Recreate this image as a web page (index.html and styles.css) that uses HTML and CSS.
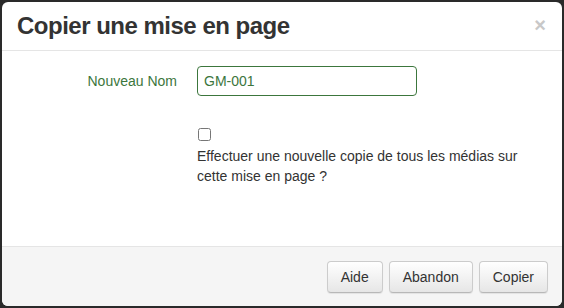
FILE: index.html
```html
<!DOCTYPE html>
<html>
<head>
<meta charset="utf-8">
<link rel="stylesheet" href="styles.css">
</head>
<body>
<div class="modal">
  <div class="modal-header">
    <h3 class="title">Copier une mise en page</h3>
    <span class="close">×</span>
  </div>
  <div class="modal-body">
    <div class="row">
      <label class="label">Nouveau Nom</label>
      <input class="input" type="text" value="GM-001">
    </div>
    <div class="row check-row">
      <div class="spacer"></div>
      <div class="check-col">
        <input type="checkbox" class="check">
        <div class="check-text">Effectuer une nouvelle copie de tous les médias sur cette mise en page ?</div>
      </div>
    </div>
  </div>
  <div class="modal-footer">
    <button class="btn">Aide</button>
    <button class="btn">Abandon</button>
    <button class="btn">Copier</button>
  </div>
</div>
</body>
</html>
```
FILE: styles.css
```css
html, body { margin: 0; padding: 0; }
body {
  background: #2a2a2a;
  font-family: "Liberation Sans", Arial, sans-serif;
  font-size: 14px;
  color: #333;
  width: 564px;
  height: 308px;
  overflow: hidden;
}
.modal {
  margin: 2px;
  width: 560px;
  height: 304px;
  background: #fff;
  border-radius: 6px;
  display: flex;
  flex-direction: column;
  overflow: hidden;
  box-sizing: border-box;
}
.modal-header {
  height: 48px;
  border-bottom: 1px solid #e5e5e5;
  display: flex;
  align-items: center;
  justify-content: space-between;
  padding: 0 15px;
  flex: none;
}
.title {
  margin: 0;
  font-size: 24px;
  letter-spacing: -0.5px;
  font-weight: bold;
  color: #333;
  line-height: 26px;
  margin-top: -1px;
}
.close {
  font-size: 20px;
  font-weight: bold;
  color: #c8c8c8;
  line-height: 20px;
  margin-right: 1px;
  margin-top: -2px;
}
.modal-body {
  flex: 1;
  padding: 15px 0 0 0;
}
.row {
  display: flex;
  align-items: center;
}
.label {
  width: 195px;
  text-align: right;
  color: #3c763d;
  padding-right: 20px;
  box-sizing: border-box;
  font-size: 14px;
  flex: none;
}
.input {
  width: 220px;
  height: 30px;
  box-sizing: border-box;
  border: 1px solid #3c763d;
  border-radius: 4px;
  padding: 0 6px;
  font-family: "Liberation Sans", Arial, sans-serif;
  font-size: 14px;
  color: #3c763d;
  outline: none;
}
.check-row {
  margin-top: 32px;
  align-items: flex-start;
}
.spacer { width: 195px; flex: none; }
.check-col { width: 345px; }
.check {
  margin: 0 0 0 1px;
  width: 13px;
  height: 13px;
  display: block;
}
.check-text {
  margin-top: 5px;
  line-height: 20px;
  color: #333;
}
.modal-footer {
  flex: none;
  height: 59px;
  border-top: 1px solid #e5e5e5;
  background: #f5f5f5;
  display: flex;
  justify-content: flex-end;
  align-items: center;
  gap: 6px;
  padding: 0 14px 0 0;
}
.btn {
  height: 32px;
  padding: 0 13px;
  font-family: "Liberation Sans", Arial, sans-serif;
  font-size: 14px;
  color: #333;
  background: linear-gradient(#fff, #e6e6e6);
  border: 1px solid #ccc;
  border-bottom-color: #b8b8b8;
  border-radius: 4px;
  box-shadow: inset 0 1px 0 rgba(255,255,255,.15), 0 1px 1px rgba(0,0,0,.075);
}
```
